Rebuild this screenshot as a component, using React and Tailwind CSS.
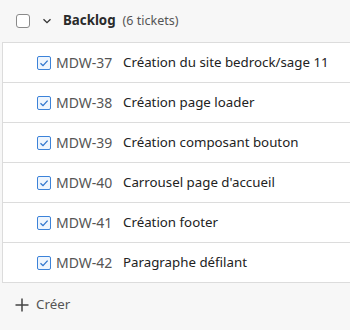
import React from 'react';

const rows = [
  ['MDW-37', 'Création du site bedrock/sage 11'],
  ['MDW-38', 'Création page loader'],
  ['MDW-39', 'Création composant bouton'],
  ['MDW-40', "Carrousel page d'accueil"],
  ['MDW-41', 'Création footer'],
  ['MDW-42', 'Paragraphe défilant'],
];

function Checked() {
  return (
    <span className="w-[14px] h-[14px] rounded-[2px] border border-[#3b82d9] bg-[#eef5fd] flex items-center justify-center shrink-0">
      <svg width="10" height="10" viewBox="0 0 10 10" fill="none">
        <path d="M1.5 5.2 L4 7.6 L8.6 2.6" stroke="#2f74cc" strokeWidth="1.3" />
      </svg>
    </span>
  );
}

export default function App() {
  return (
    <div className="w-[350px] h-[330px] bg-[#f7f7f7] overflow-hidden text-[13.3px]" style={{ fontFamily: '"Noto Sans", sans-serif' }}>
      {/* Header */}
      <div className="h-[42px] flex items-center pl-4">
        <span className="w-[14px] h-[14px] rounded-[3px] border border-[#8a8a8a] bg-white" />
        <svg className="ml-[12px]" width="10" height="10" viewBox="0 0 10 10" fill="none">
          <path d="M1.5 3.2 L5 6.7 L8.5 3.2" stroke="#333" strokeWidth="1.3" />
        </svg>
        <span className="ml-[11px] font-bold text-[#2a2a2a] text-[13.3px]">Backlog</span>
        <span className="ml-[7px] text-[12.5px] text-[#555]">(6 tickets)</span>
      </div>

      {/* Ticket list */}
      <div className="ml-[2px] border-l border-t border-[#dcdcdc] bg-white">
        {rows.map(([key, title]) => (
          <div key={key} className="h-[40px] flex items-center pl-[34px] border-b border-[#dcdcdc]">
            <Checked />
            <span className="ml-[5px] text-[#555] w-[67px] text-[14px]">{key}</span>
            <span className="text-[#222]">{title}</span>
          </div>
        ))}
      </div>

      {/* Create */}
      <div className="h-[40px] flex items-center pl-[15px] pt-[4px] text-[#555]">
        <svg width="14" height="14" viewBox="0 0 14 14" fill="none">
          <path d="M7 0.5 V13.5 M0.5 7 H13.5" stroke="#444" strokeWidth="1.5" />
        </svg>
        <span className="ml-[7px]">Créer</span>
      </div>
    </div>
  );
}
